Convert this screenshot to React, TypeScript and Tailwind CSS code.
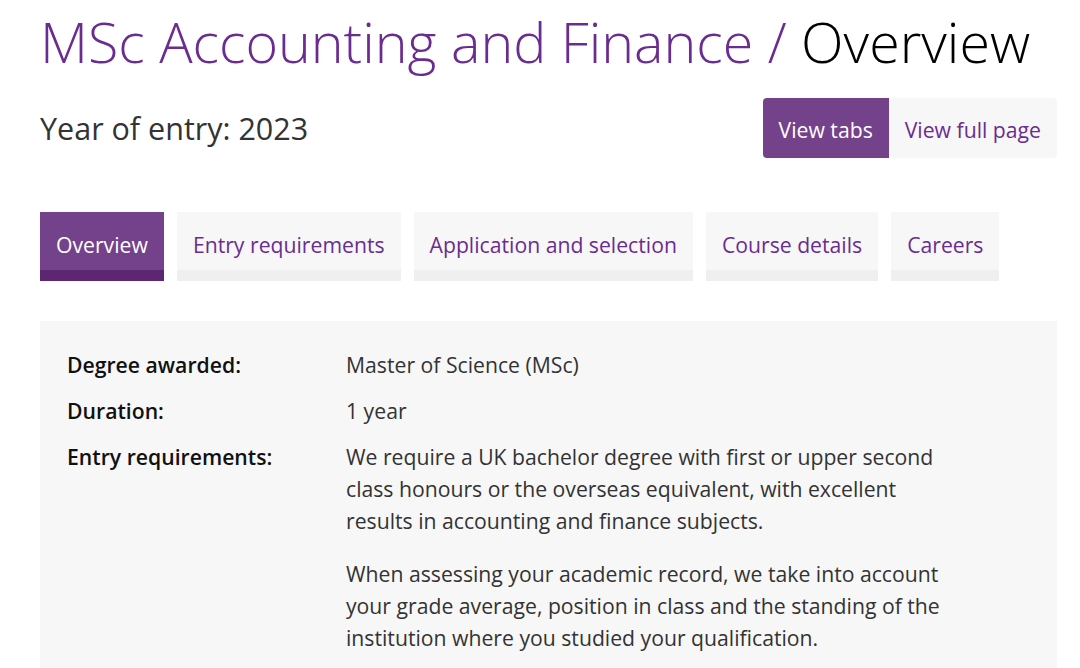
export default function App() {
  const tabs = ['Overview', 'Entry requirements', 'Application and selection', 'Course details', 'Careers'];

  return (
    <div className="min-h-[668px] bg-white font-['Open_Sans',sans-serif] text-[#333]">
      <div className="ml-[40px] w-[1017px]">
        <h1 className="whitespace-nowrap pt-[6px] text-[55.6px] font-light leading-[72px] text-[#6b2c91]">
          MSc Accounting and Finance / <span className="text-black">Overview</span>
        </h1>

        <div className="mt-[20px] flex items-center justify-between">
          <p className="text-[30.5px] leading-[40px] text-[#333]">Year of entry: 2023</p>
          <div className="flex h-[60px] overflow-hidden rounded-[4px] text-[21.2px]">
            <button className="bg-[#74418b] px-[16px] pt-[3px] text-white">View tabs</button>
            <button className="bg-[#f7f7f7] px-[16px] pt-[3px] text-[#6b2c91]">View full page</button>
          </div>
        </div>

        <nav className="mt-[54px] flex gap-[13px]">
          {tabs.map((t, i) => (
            <div
              key={t}
              className={
                i === 0
                  ? 'flex h-[69px] flex-col bg-[#74418b] text-white'
                  : 'flex h-[69px] flex-col bg-[#f7f7f7] text-[#6b2c91]'
              }
            >
              <span className="flex flex-1 items-center px-[16px] pt-[8px] text-[21.2px]">{t}</span>
              <span className={i === 0 ? 'h-[11px] bg-[#5c2673]' : 'h-[11px] bg-[#efefef]'} />
            </div>
          ))}
        </nav>

        <section className="mt-[40px] bg-[#f7f7f7] px-[27px] pt-[28px] pb-[30px] text-[21.2px] leading-[32px]">
          <dl className="grid grid-cols-[279px_1fr] gap-y-[14px]">
            <dt className="font-semibold text-[#111]">Degree awarded:</dt>
            <dd>Master of Science (MSc)</dd>
            <dt className="font-semibold text-[#111]">Duration:</dt>
            <dd>1 year</dd>
            <dt className="font-semibold text-[#111]">Entry requirements:</dt>
            <dd className="max-w-[604px]">
              <p>
                We require a UK bachelor degree with first or upper second class honours or the overseas
                equivalent, with excellent results in accounting and finance subjects.
              </p>
              <p className="mt-[21px]">
                When assessing your academic record, we take into account your grade average, position in
                class and the standing of the institution where you studied your qualification.
              </p>
            </dd>
          </dl>
        </section>
      </div>
    </div>
  );
}
